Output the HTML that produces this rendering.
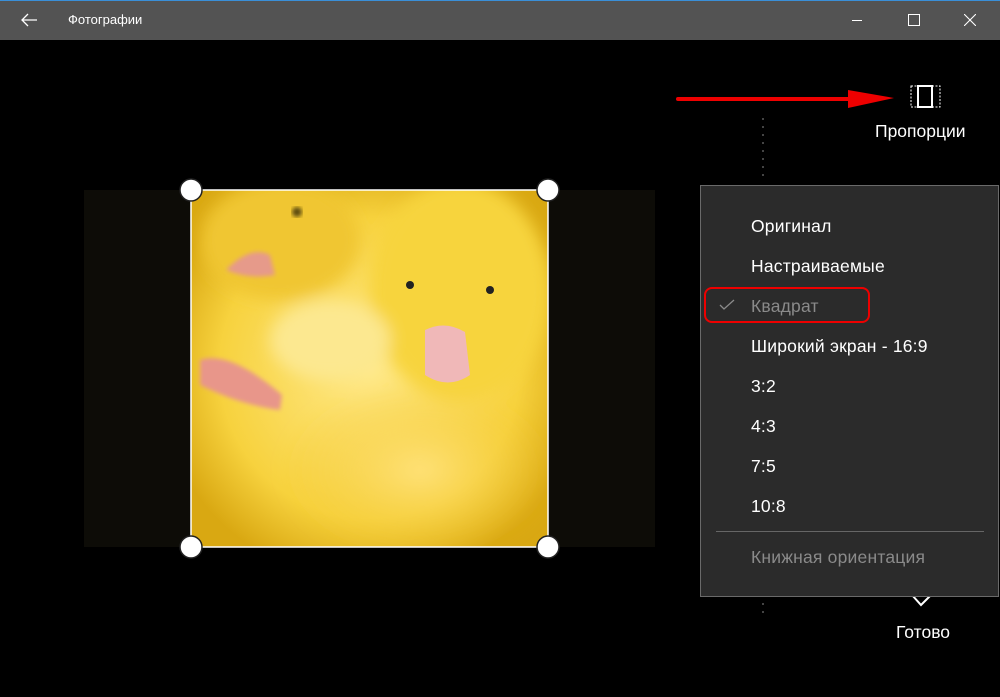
<!DOCTYPE html>
<html><head><meta charset="utf-8"><style>
body{margin:0;width:1000px;height:697px;background:#000;overflow:hidden;position:relative;font-family:"Segoe UI","Liberation Sans","DejaVu Sans",sans-serif;color:#fff}
.tb{position:absolute;left:0;top:0;width:1000px;height:40px;background:#535353;border-top:1px solid #3a8fd8;box-sizing:border-box}
.t{position:absolute;top:11px;font-size:13px}
.menu{position:absolute;left:700px;top:185px;width:299px;height:412px;background:#2b2b2b;border:1px solid #6a6a6a;box-sizing:border-box}
.mi{position:absolute;left:50px;font-size:17.5px;line-height:20px;white-space:nowrap;letter-spacing:0.2px}
.dim{color:#8a8a8a}
</style></head><body>
<div class="tb">
<svg style="position:absolute;left:20px;top:11px" width="18" height="16"><path d="M17 8H2M8 2L2 8L8 14" stroke="#fff" stroke-width="1.3" fill="none"/></svg>
<div class="t" style="left:68px">Фотографии</div>
<div style="position:absolute;left:852px;top:19px;width:10px;height:1px;background:#fff"></div>
<div style="position:absolute;left:908px;top:13px;width:10px;height:10px;border:1px solid #fff"></div>
<svg style="position:absolute;left:964px;top:13px" width="12" height="12"><path d="M0 0L12 12M12 0L0 12" stroke="#fff" stroke-width="1.1"/></svg>
</div>
<svg style="position:absolute;left:0;top:40px" width="1000" height="657">
<line x1="678" y1="59" x2="860" y2="59" stroke="#e00" stroke-width="4" stroke-linecap="round"/>
<polygon points="848,50 894,58 848,68" fill="#e00"/>
<rect x="911" y="46" width="29" height="21" fill="none" stroke="#fff" stroke-width="1" stroke-dasharray="2,1.5"/>
<rect x="918" y="46" width="14" height="21" fill="none" stroke="#fff" stroke-width="2"/>
<line x1="763" y1="78" x2="763" y2="140" stroke="#888" stroke-dasharray="2,6"/>
<line x1="763" y1="555" x2="763" y2="575" stroke="#888" stroke-dasharray="2,6"/>
<path d="M912 555L921 565L931 555" stroke="#fff" stroke-width="2" fill="none"/>
<defs>
<radialGradient id="g1" cx="0.5" cy="0.5" r="0.6"><stop offset="0" stop-color="#ffe98a"/><stop offset="0.7" stop-color="#f7d23e"/><stop offset="1" stop-color="#d9a812"/></radialGradient>
<radialGradient id="g2"><stop offset="0" stop-color="#ffe27a"/><stop offset="1" stop-color="#f2c528" stop-opacity="0"/></radialGradient>
<filter id="bl" x="-20%" y="-20%" width="140%" height="140%"><feGaussianBlur stdDeviation="8"/></filter>
<filter id="bl2"><feGaussianBlur stdDeviation="2"/></filter>
<clipPath id="cp"><rect x="191" y="150" width="357" height="357"/></clipPath>
</defs>
<rect x="84" y="150" width="571" height="357" fill="#0d0c07"/>
<g clip-path="url(#cp)">
<rect x="191" y="150" width="357" height="357" fill="url(#g1)"/>
<g filter="url(#bl)">
<ellipse cx="280" cy="200" rx="80" ry="60" fill="#f0c630"/>
<ellipse cx="460" cy="250" rx="90" ry="110" fill="#f7d43e"/>
<ellipse cx="420" cy="430" rx="140" ry="90" fill="url(#g2)"/>
<ellipse cx="330" cy="300" rx="60" ry="40" fill="#fce890"/>
</g>
<g filter="url(#bl2)">
<path d="M226 230Q250 205 270 215L275 235Q250 240 226 230Z" fill="#e69a8a"/>
<path d="M200 320Q230 310 282 355L280 370Q240 365 200 345Z" fill="#e8968a"/>
</g>
<path d="M425 290Q445 280 465 292L470 335Q448 350 425 335Z" fill="#f0b8b8"/>
<circle cx="410" cy="245" r="4" fill="#222"/><circle cx="490" cy="250" r="4" fill="#222"/>
<circle cx="297" cy="172" r="5" fill="#5a4a10" filter="url(#bl2)"/>
</g>
<rect x="191" y="150" width="357" height="357" fill="none" stroke="#fff" stroke-width="1.5"/>
<g fill="#fff" stroke="#222" stroke-width="1.5"><circle cx="191" cy="150" r="11"/><circle cx="548" cy="150" r="11"/><circle cx="191" cy="507" r="11"/><circle cx="548" cy="507" r="11"/></g>
</svg>
<div style="position:absolute;left:875px;top:121px;font-size:17.5px">Пропорции</div>
<div style="position:absolute;left:896px;top:622px;font-size:17.5px">Готово</div>
<div class="menu">
<div class="mi" style="top:30px">Оригинал</div>
<div class="mi" style="top:70px">Настраиваемые</div>
<svg style="position:absolute;left:18px;top:113px" width="16" height="12"><path d="M1 6L5 10L15 1" stroke="#8a8a8a" stroke-width="1.3" fill="none"/></svg>
<div class="mi dim" style="top:110px">Квадрат</div>
<div style="position:absolute;left:3px;top:101px;width:166px;height:36px;border:2px solid #e00;border-radius:8px;box-sizing:border-box"></div>
<div class="mi" style="top:150px">Широкий экран - 16:9</div>
<div class="mi" style="top:190px">3:2</div>
<div class="mi" style="top:230px">4:3</div>
<div class="mi" style="top:270px">7:5</div>
<div class="mi" style="top:310px">10:8</div>
<div style="position:absolute;left:15px;top:345px;width:268px;height:1px;background:#666"></div>
<div class="mi dim" style="top:361px">Книжная ориентация</div>
</div>
</body></html>
